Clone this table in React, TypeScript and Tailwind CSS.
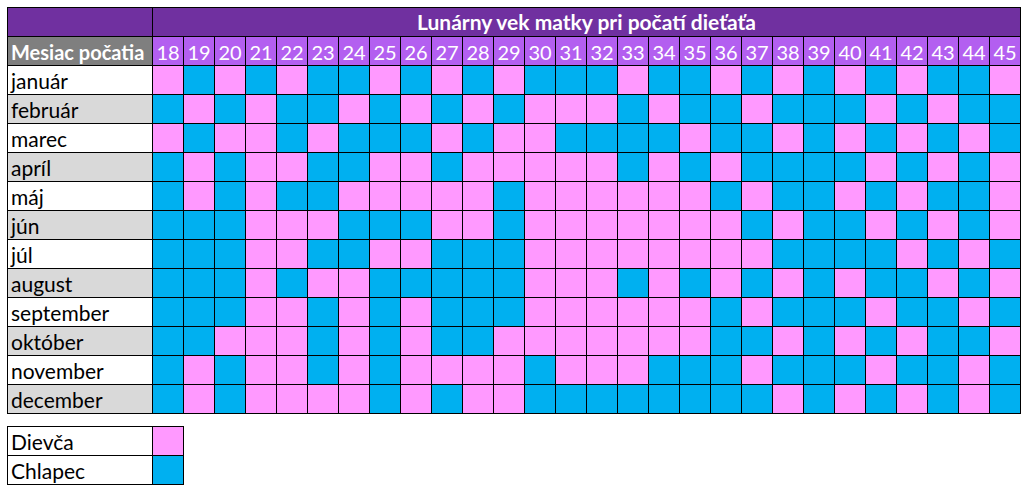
const MONTHS: [string, string][] = [
  ["január", "PBPBPBBP" + "BPBPBBBP" + "BB" + "PBPBPBPBBP"],
  ["február", "BPBPBBPB" + "PBPBPPPB" + "PB" + "BPBBBPBPBB"],
  ["marec", "PBPPBPBB" + "BPBPPBBB" + "BP" + "BBPBPBPBPB"],
  ["apríl", "BPBPPBBP" + "PBPPPPPB" + "PB" + "PBBBBPBPBP"],
  ["máj", "BPBPBBPP" + "PPPBPPPP" + "PP" + "BPBBPBPBBP"],
  ["jún", "BBBPPPBB" + "BPPBPPPP" + "PP" + "PBPBBPBPBP"],
  ["júl", "BBBPPBBP" + "PBBBPPPP" + "PP" + "PPBBBBPBPB"],
  ["august", "BBBPBPPB" + "BBBBPPPB" + "PB" + "PBPBPBBPBP"],
  ["september", "BBBPPBPB" + "PBBBPPPP" + "PP" + "BPBBBPBBPB"],
  ["október", "BBPPPBPB" + "PBBPPPPP" + "PP" + "BBPBPBPBBP"],
  ["november", "BPBPPBPB" + "PPPPBPPP" + "BB" + "BPBBBPBBPB"],
  ["december", "BPBPPPPB" + "PBPPBBBB" + "BB" + "BBPBPBPBPB"],
];

const AGES = Array.from({ length: 28 }, (_, i) => 18 + i);

function Cell({ kind }: { kind: string }) {
  return (
    <div
      className={`h-[29px] border-r border-b border-black ${
        kind === "B" ? "bg-[#00b0f0]" : "bg-[#ff99ff]"
      }`}
    />
  );
}

export default function App() {
  return (
    <div
      className="min-h-screen bg-white pl-[7px] pt-[7px] text-black"
      style={{ fontFamily: "Lato, 'Open Sans', sans-serif" }}
    >
      <div className="grid w-max grid-cols-[145px_repeat(28,31px)] border-l border-t border-black">
        <div className="h-[29px] border-r border-b border-black bg-[#7030a0]" />
        <div className="col-span-28 flex h-[29px] items-center justify-center border-r border-b border-black bg-[#7030a0] text-[21px] font-bold text-white">
          Lunárny vek matky pri počatí dieťaťa
        </div>

        <div className="flex h-[29px] items-end border-r border-b border-black bg-[#7f7f7f] pb-[3px] pl-[3px] text-[20px] leading-none font-bold text-white">
          Mesiac počatia
        </div>
        {AGES.map((a) => (
          <div
            key={a}
            className="flex h-[29px] items-end justify-center border-r border-b border-black bg-[#b35ff0] pb-[3px] text-[20px] leading-none text-white"
          >
            {a}
          </div>
        ))}

        {MONTHS.map(([name, pattern], r) => (
          <div key={name} className="contents">
            <div
              className={`flex h-[29px] items-end border-r border-b border-black pb-[3px] pl-[3px] text-[21px] leading-none ${
                r % 2 === 1 ? "bg-[#d9d9d9]" : "bg-white"
              }`}
            >
              {name}
            </div>
            {pattern.split("").map((k, i) => (
              <Cell key={i} kind={k} />
            ))}
          </div>
        ))}
      </div>

      <div className="mt-[12px] grid w-max grid-cols-[145px_31px] border-l border-t border-black">
        <div className="flex h-[29px] items-end border-r border-b border-black pb-[3px] pl-[3px] text-[21px] leading-none">
          Dievča
        </div>
        <Cell kind="P" />
        <div className="flex h-[29px] items-end border-r border-b border-black pb-[3px] pl-[3px] text-[21px] leading-none">
          Chlapec
        </div>
        <Cell kind="B" />
      </div>
    </div>
  );
}
